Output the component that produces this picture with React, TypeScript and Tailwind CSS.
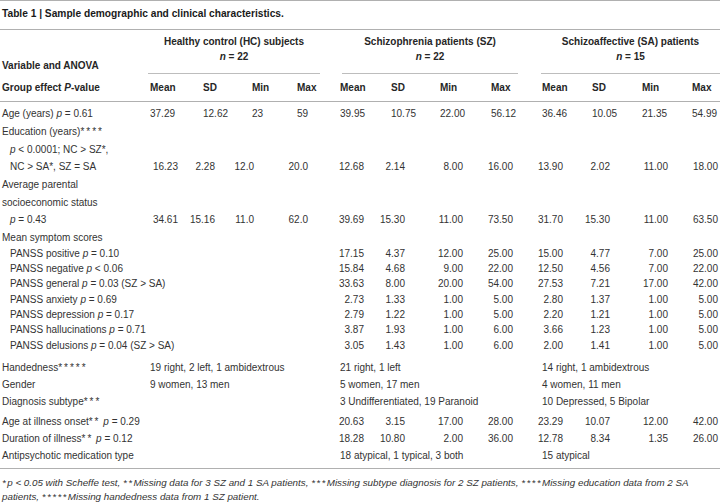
import React from "react";

const GRID =
  "grid grid-cols-[138px_38px_37px_39px_54px_56px_41px_58px_50px_50px_47px_58px_50px] items-center";

const HPL = [
  "pl-[10px]",
  "pl-[25px]",
  "pl-[37px]",
  "pl-[43px]",
  "pl-[32px]",
  "pl-[27px]",
  "pl-[35px]",
  "pl-[28px]",
  "pl-[29px]",
  "pl-[29px]",
  "pl-[32px]",
  "pl-[24px]",
];

type NumRowProps = {
  label: React.ReactNode;
  vals?: string[];
  left?: boolean;
  h: string;
  indent?: boolean;
};

function NumRow({ label, vals, left, h, indent }: NumRowProps) {
  const v = vals ?? [];
  return (
    <div className={`${GRID} ${h}`}>
      <div className={`whitespace-nowrap ${indent ? "pl-[8px]" : ""}`}>{label}</div>
      {Array.from({ length: 12 }).map((_, i) => (
        <div
          key={i}
          className={`whitespace-nowrap ${left ? `text-left ${HPL[i]}` : "text-right"}`}
        >
          {v[i] ?? ""}
        </div>
      ))}
    </div>
  );
}

function TextRow({
  label,
  hc,
  sz,
  sa,
  h,
}: {
  label: React.ReactNode;
  hc?: string;
  sz?: string;
  sa?: string;
  h: string;
}) {
  return (
    <div className={`flex items-center whitespace-nowrap ${h}`}>
      <div className="w-[148px] shrink-0">{label}</div>
      <div className="w-[190px] shrink-0">{hc ?? ""}</div>
      <div className="w-[202px] shrink-0">{sz ?? ""}</div>
      <div className="flex-1">{sa ?? ""}</div>
    </div>
  );
}

const P = () => <i>p</i>;
const St = ({ n }: { n: number }) => (
  <span className="tracking-[2px]">{"*".repeat(n)}</span>
);
const Fs = ({ n }: { n: number }) => (
  <span className="tracking-[1.4px]">{"*".repeat(n)}</span>
);

function GroupHead({ title, n, w }: { title: string; n: string; w: string }) {
  return (
    <div
      className={`${w} h-[44px] shrink-0 border-b border-[#bdbdbd] flex flex-col items-center pt-[5px] font-bold text-[#262626]`}
    >
      <div className="leading-[14px] whitespace-nowrap">{title}</div>
      <div className="leading-[14px] mt-[1px] whitespace-nowrap">
        <i>n</i> = {n}
      </div>
    </div>
  );
}

export default function App() {
  const U = "h-[17.7px]";
  const S = "h-[15.4px]";
  return (
    <div
      className="w-[720px] h-[503px] overflow-hidden bg-white text-[10px] text-[#333333]"
      style={{ fontFamily: '"Liberation Sans", Arial, sans-serif' }}
    >
      <div className="h-px bg-[#b0b0b0]" />
      <div className="h-[28px] pl-[2px] pt-[6px] font-bold text-[10.2px] leading-[13px] text-[#1a1a1a]">
        Table 1 | Sample demographic and clinical characteristics.
      </div>
      <div className="h-px bg-[#b0b0b0]" />

      {/* header row A */}
      <div className="flex pl-[2px] h-[44px]">
        <div className="w-[146px] shrink-0 flex items-end pb-[2px] font-bold leading-[12px] text-[#262626]">
          Variable and ANOVA
        </div>
        <GroupHead title="Healthy control (HC) subjects" n="22" w="w-[172px]" />
        <div className="w-[22px] shrink-0" />
        <GroupHead title="Schizophrenia patients (SZ)" n="22" w="w-[176px]" />
        <div className="w-[23px] shrink-0" />
        <GroupHead title="Schizoaffective (SA) patients" n="15" w="flex-1" />
      </div>

      {/* header row B */}
      <div className={`${GRID} h-[27px] pl-[2px] font-bold text-[#262626]`}>
        <div className="whitespace-nowrap">
          Group effect <i>P</i>-value
        </div>
        {["Mean", "SD", "Min", "Max", "Mean", "SD", "Min", "Max", "Mean", "SD", "Min", "Max"].map(
          (t, i) => (
            <div key={i} className={`whitespace-nowrap ${HPL[i]}`}>
              {t}
            </div>
          )
        )}
      </div>
      <div className="h-px bg-[#b0b0b0]" />

      <div className="pl-[2px] pt-[3px]">
        <NumRow
          h={U}
          left
          label={
            <>
              Age (years) <P /> = 0.61
            </>
          }
          vals={["37.29", "12.62", "23", "59", "39.95", "10.75", "22.00", "56.12", "36.46", "10.05", "21.35", "54.99"]}
        />
        <NumRow
          h={U}
          label={
            <>
              Education (years)
              <St n={4} />
            </>
          }
        />
        <NumRow
          h={U}
          indent
          label={
            <>
              <P /> &lt; 0.0001; NC &gt; SZ*,
            </>
          }
        />
        <NumRow
          h={U}
          indent
          label="NC > SA*, SZ = SA"
          vals={["16.23", "2.28", "12.0", "20.0", "12.68", "2.14", "8.00", "16.00", "13.90", "2.02", "11.00", "18.00"]}
        />
        <NumRow h={U} label="Average parental" />
        <NumRow h={U} label="socioeconomic status" />
        <NumRow
          h={U}
          indent
          label={
            <>
              <P /> = 0.43
            </>
          }
          vals={["34.61", "15.16", "11.0", "62.0", "39.69", "15.30", "11.00", "73.50", "31.70", "15.30", "11.00", "63.50"]}
        />
        <NumRow h="h-[16.5px]" label="Mean symptom scores" />
        <NumRow
          h={S}
          indent
          label={
            <>
              PANSS positive <P /> = 0.10
            </>
          }
          vals={["", "", "", "", "17.15", "4.37", "12.00", "25.00", "15.00", "4.77", "7.00", "25.00"]}
        />
        <NumRow
          h={S}
          indent
          label={
            <>
              PANSS negative <P /> &lt; 0.06
            </>
          }
          vals={["", "", "", "", "15.84", "4.68", "9.00", "22.00", "12.50", "4.56", "7.00", "22.00"]}
        />
        <NumRow
          h={S}
          indent
          label={
            <>
              PANSS general <P /> = 0.03 (SZ &gt; SA)
            </>
          }
          vals={["", "", "", "", "33.63", "8.00", "20.00", "54.00", "27.53", "7.21", "17.00", "42.00"]}
        />
        <NumRow
          h={S}
          indent
          label={
            <>
              PANSS anxiety <P /> = 0.69
            </>
          }
          vals={["", "", "", "", "2.73", "1.33", "1.00", "5.00", "2.80", "1.37", "1.00", "5.00"]}
        />
        <NumRow
          h={S}
          indent
          label={
            <>
              PANSS depression <P /> = 0.17
            </>
          }
          vals={["", "", "", "", "2.79", "1.22", "1.00", "5.00", "2.20", "1.21", "1.00", "5.00"]}
        />
        <NumRow
          h={S}
          indent
          label={
            <>
              PANSS hallucinations <P /> = 0.71
            </>
          }
          vals={["", "", "", "", "3.87", "1.93", "1.00", "6.00", "3.66", "1.23", "1.00", "5.00"]}
        />
        <NumRow
          h={S}
          indent
          label={
            <>
              PANSS delusions <P /> = 0.04 (SZ &gt; SA)
            </>
          }
          vals={["", "", "", "", "3.05", "1.43", "1.00", "6.00", "2.00", "1.41", "1.00", "5.00"]}
        />

        <div className="h-[6px]" />
        <TextRow
          h="h-[17px]"
          label={
            <>
              Handedness
              <St n={5} />
            </>
          }
          hc="19 right, 2 left, 1 ambidextrous"
          sz="21 right, 1 left"
          sa="14 right, 1 ambidextrous"
        />
        <TextRow h="h-[17px]" label="Gender" hc="9 women, 13 men" sz="5 women, 17 men" sa="4 women, 11 men" />
        <TextRow
          h="h-[17px]"
          label={
            <>
              Diagnosis subtype
              <St n={3} />
            </>
          }
          sz="3 Undifferentiated, 19 Paranoid"
          sa="10 Depressed, 5 Bipolar"
        />
        <div className="h-[3px]" />
        <NumRow
          h="h-[17px]"
          label={
            <>
              Age at illness onset
              <St n={2} /> <P /> = 0.29
            </>
          }
          vals={["", "", "", "", "20.63", "3.15", "17.00", "28.00", "23.29", "10.07", "12.00", "42.00"]}
        />
        <NumRow
          h="h-[17px]"
          label={
            <>
              Duration of illness
              <St n={2} /> <P /> = 0.12
            </>
          }
          vals={["", "", "", "", "18.28", "10.80", "2.00", "36.00", "12.78", "8.34", "1.35", "26.00"]}
        />
        <TextRow
          h="h-[17px]"
          label="Antipsychotic medication type"
          sz="18 atypical, 1 typical, 3 both"
          sa="15 atypical"
        />
      </div>

      <div className="mt-[4px] h-px bg-[#b0b0b0]" />
      <div className="pl-[2px] pt-[7px] italic leading-[13.5px] text-[9.8px]">
        <div className="whitespace-nowrap">
          <Fs n={1} />p &lt; 0.05 with Scheffe test, <Fs n={2} />Missing data for 3 SZ and 1 SA patients,{" "}
          <Fs n={3} />Missing subtype diagnosis for 2 SZ patients, <Fs n={4} />Missing education data from 2 SA
        </div>
        <div className="whitespace-nowrap">
          patients, <Fs n={5} />Missing handedness data from 1 SZ patient.
        </div>
      </div>
    </div>
  );
}
